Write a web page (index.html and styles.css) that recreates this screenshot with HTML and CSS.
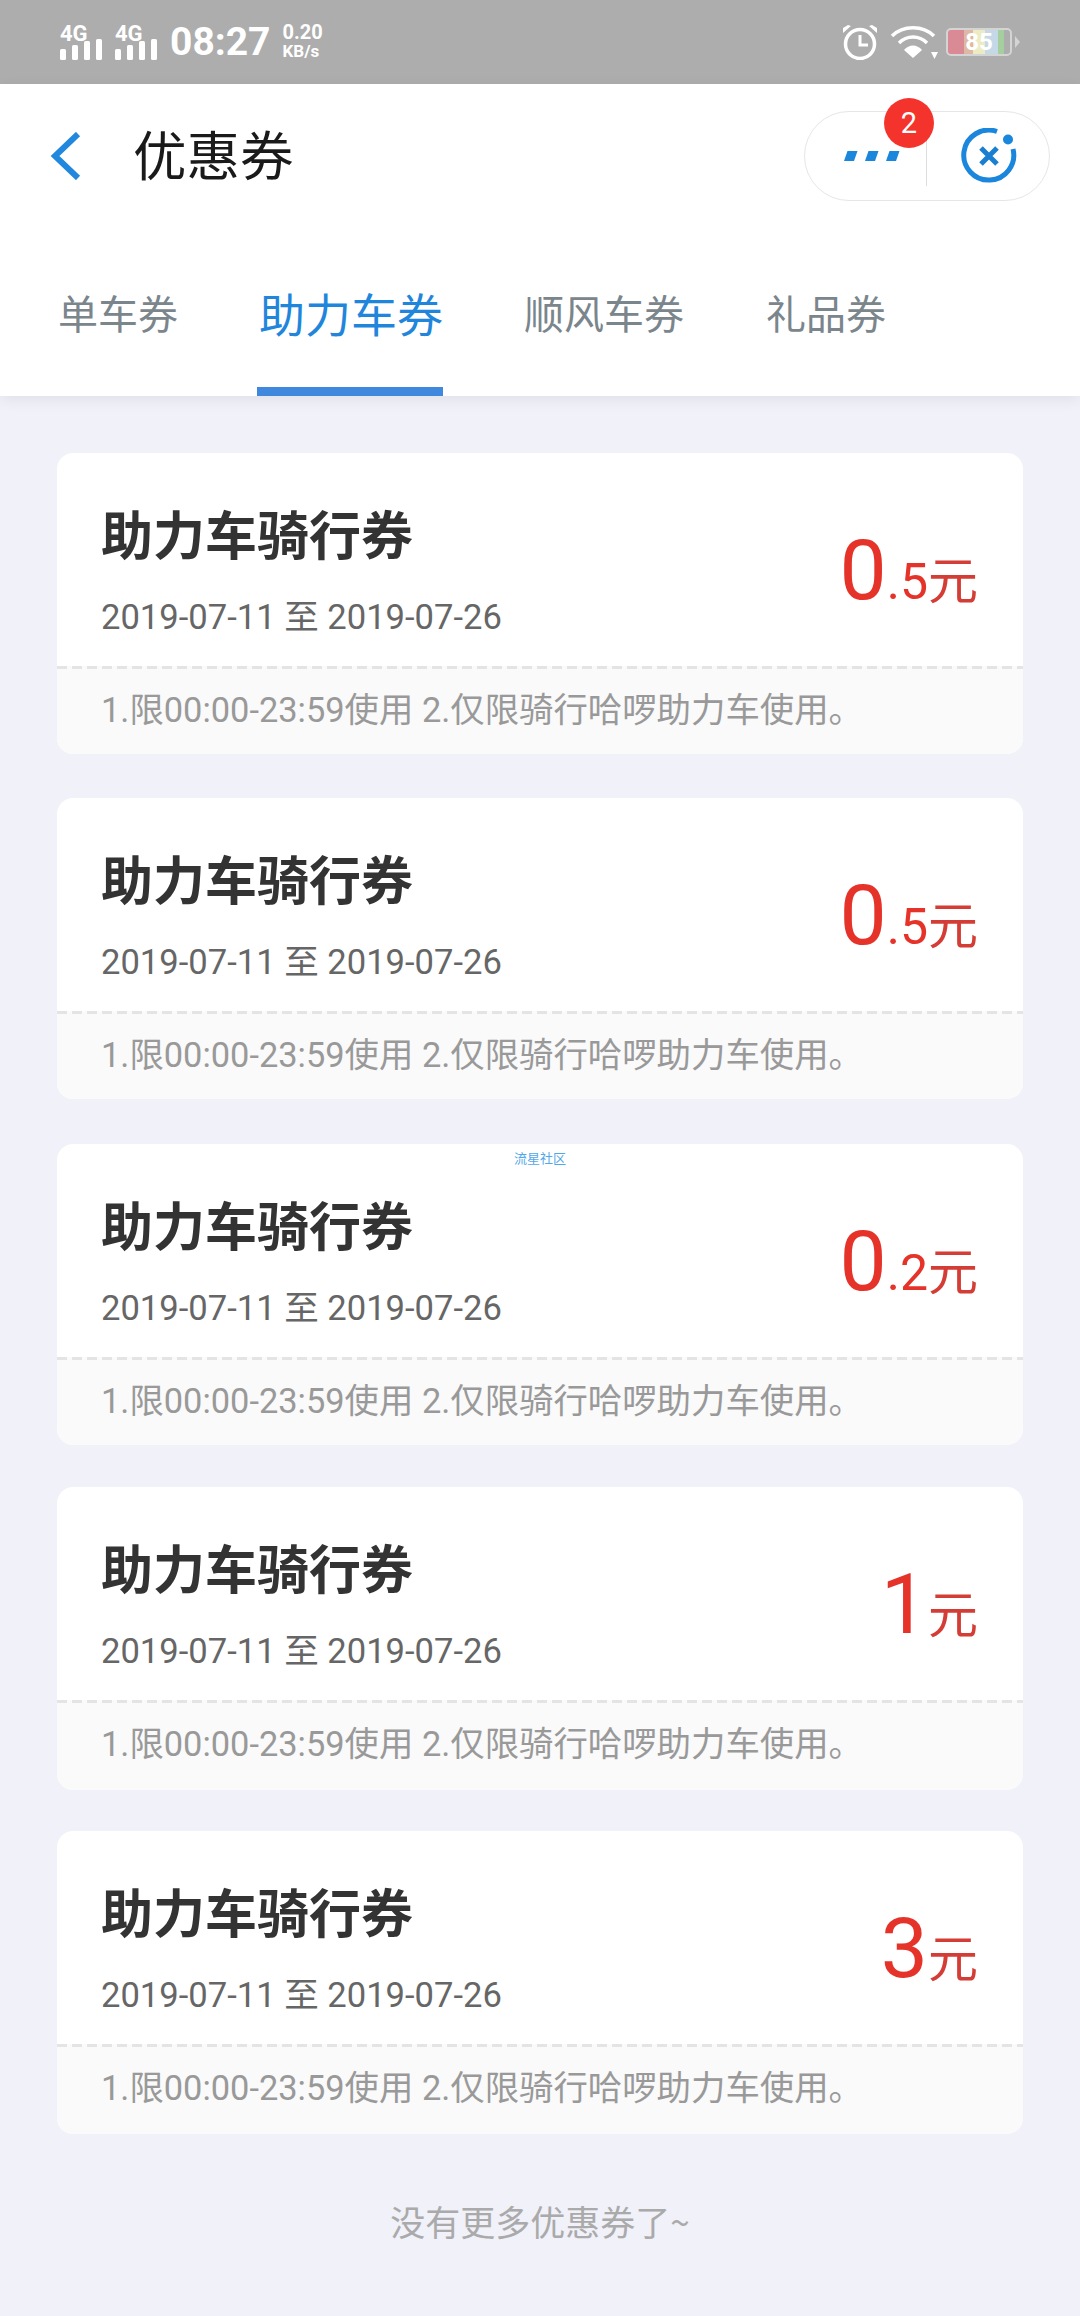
FILE: index.html
```html
<!DOCTYPE html>
<html lang="zh-CN">
<head>
<meta charset="utf-8">
<title>优惠券</title>
<link rel="stylesheet" href="styles.css">
</head>
<body>
<div class="status">
  <div class="status-left">
    <div class="net"><span class="net-label">4G</span><svg class="bars" width="42" height="21" viewBox="0 0 42 21"><g fill="#fff"><rect x="0" y="10" width="6" height="11" rx="1.5"/><rect x="12" y="6" width="6" height="15" rx="1.5"/><rect x="24" y="2" width="6" height="19" rx="1.5"/><rect x="36" y="0" width="6" height="21" rx="1.5"/></g></svg></div>
    <div class="net"><span class="net-label">4G</span><svg class="bars" width="42" height="21" viewBox="0 0 42 21"><g fill="#fff"><rect x="0" y="10" width="6" height="11" rx="1.5"/><rect x="12" y="6" width="6" height="15" rx="1.5"/><rect x="24" y="2" width="6" height="19" rx="1.5"/><rect x="36" y="0" width="6" height="21" rx="1.5"/></g></svg></div>
    <span class="clock">08:27</span>
    <div class="speed"><span>0.20</span><span class="speed-unit">KB/s</span></div>
  </div>
  <div class="status-right">
    <svg width="36" height="36" viewBox="0 0 36 36"><circle cx="18" cy="20" r="14.5" fill="none" stroke="#fff" stroke-width="3.5"/><path d="M18 11v10h8" fill="none" stroke="#fff" stroke-width="3"/><path d="M1 9 9 2 6 1 1 4zM35 9 27 2 30 1 35 4z" fill="#fff"/></svg>
    <svg width="48" height="36" viewBox="0 0 48 36"><g fill="none" stroke="#fff" stroke-width="3.500"><path d="M2 12C13 1 33 1 44 12"/><path d="M9 19C17 11 29 11 37 19"/></g><path d="M14 26C19 20 27 20 32 26L23 34Z" fill="#fff"/><path d="M41 28h7l-3.500 7z" fill="#fff"/></svg>
    <div class="battery"><div class="battery-body"><span class="battery-text">85</span></div><span class="battery-tip"></span></div>
  </div>
</div>
<header class="head">
  <div class="title-row">
    <svg class="back" width="34" height="48" viewBox="0 0 34 48"><path d="M30 2 7 24l23 22" fill="none" stroke="#2288dd" stroke-width="6"/></svg>
    <h1 class="title">优惠券</h1>
    <div class="capsule">
      <div class="cap-more">
        <svg width="58" height="10" viewBox="0 0 58 10"><g fill="#1a86dc"><path d="M3.500 0h10L10 10H0z"/><path d="M24.500 0h10L31 10H21z"/><path d="M45.500 0h10L52 10H42z"/></g></svg>
        <span class="badge">2</span>
      </div>
      <div class="cap-close">
        <svg width="56" height="56" viewBox="0 0 56 56"><path d="M36 3.500A25 25 0 1 0 52 21" fill="none" stroke="#1a86dc" stroke-width="5"/><circle cx="47" cy="11.500" r="5" fill="#1a86dc"/><path d="M20 20 36 36M36 20 20 36" stroke="#1a7fd0" stroke-width="5" fill="none"/></svg>
      </div>
    </div>
  </div>
  <nav class="tabs">
    <span class="tab">单车券</span>
    <span class="tab tab-active">助力车券</span>
    <span class="tab">顺风车券</span>
    <span class="tab">礼品券</span>
  </nav>
</header>
<main class="list">
  <article class="card">
    <div class="card-main">
      <div><div class="card-title">助力车骑行券</div><div class="card-date">2019-07-11 至 2019-07-26</div></div>
      <div class="price"><span class="int">0</span><span class="dec">.5</span><span class="yuan">元</span></div>
    </div>
    <div class="card-note">1.限00:00-23:59使用 2.仅限骑行哈啰助力车使用。</div>
  </article>
  <article class="card">
    <div class="card-main">
      <div><div class="card-title">助力车骑行券</div><div class="card-date">2019-07-11 至 2019-07-26</div></div>
      <div class="price"><span class="int">0</span><span class="dec">.5</span><span class="yuan">元</span></div>
    </div>
    <div class="card-note">1.限00:00-23:59使用 2.仅限骑行哈啰助力车使用。</div>
  </article>
  <article class="card">
    <span class="watermark">流星社区</span>
    <div class="card-main">
      <div><div class="card-title">助力车骑行券</div><div class="card-date">2019-07-11 至 2019-07-26</div></div>
      <div class="price"><span class="int">0</span><span class="dec">.2</span><span class="yuan">元</span></div>
    </div>
    <div class="card-note">1.限00:00-23:59使用 2.仅限骑行哈啰助力车使用。</div>
  </article>
  <article class="card">
    <div class="card-main">
      <div><div class="card-title">助力车骑行券</div><div class="card-date">2019-07-11 至 2019-07-26</div></div>
      <div class="price"><span class="int">1</span><span class="yuan">元</span></div>
    </div>
    <div class="card-note">1.限00:00-23:59使用 2.仅限骑行哈啰助力车使用。</div>
  </article>
  <article class="card">
    <div class="card-main">
      <div><div class="card-title">助力车骑行券</div><div class="card-date">2019-07-11 至 2019-07-26</div></div>
      <div class="price"><span class="int">3</span><span class="yuan">元</span></div>
    </div>
    <div class="card-note">1.限00:00-23:59使用 2.仅限骑行哈啰助力车使用。</div>
  </article>
  <p class="end">没有更多优惠券了~</p>
</main>
</body>
</html>
```

FILE: styles.css
```css
* { box-sizing: border-box; }
html, body { margin: 0; padding: 0; }
body {
  width: 1080px;
  height: 2316px;
  overflow: hidden;
  background: #f1f1f9;
  font-family: Roboto, "Noto Sans CJK SC", sans-serif;
}
.status {
  height: 84px;
  background: #adadad;
  color: #fff;
  display: flex;
  justify-content: space-between;
  align-items: center;
  padding: 0 60px 0 60px;
}
.status-left { display: flex; align-items: center; gap: 12px; }
.net { width: 42px; height: 36px; position: relative; margin-right: 1px; }
.net-label { position: absolute; left: 0; top: -1px; font-size: 22px; font-weight: 700; line-height: 22px; }
.bars { position: absolute; left: 0; bottom: 0; }
.clock { font-size: 39px; font-weight: 700; line-height: 44px; }
.speed { display: flex; flex-direction: column; font-size: 20px; font-weight: 700; line-height: 19px; }
.speed-unit { font-size: 17px; }
.status-right { display: flex; align-items: center; gap: 12px; }
.battery { display: flex; align-items: center; gap: 3px; margin-left: -4px; }
.battery-body {
  width: 66px; height: 28px;
  border: 2px solid #d4d4d4;
  border-radius: 5px;
  background: linear-gradient(90deg, #d98a94 0 25%, #ddb8a4 25% 40%, #ecebc4 40% 60%, #c4d8e8 60% 80%, #a5cf9f 80% 90%, #adadad 90%);
  display: flex; align-items: center; justify-content: center;
}
.battery-text { font-size: 24px; font-weight: 700; line-height: 24px; color: #fff; }
.battery-tip { width: 0; height: 0; border-left: 5px solid #d4d4d4; border-top: 6px solid transparent; border-bottom: 6px solid transparent; }
.head {
  height: 312px;
  background: #fff;
  box-shadow: 0 4px 14px rgba(0, 0, 0, .07);
  position: relative;
}
.title-row { height: 146px; display: flex; align-items: flex-start; padding: 0 0 0 48px; position: relative; }
.back { margin-top: 48px; flex: none; }
.title { margin: 34px 0 0 51px; font-size: 53.500px; font-weight: 400; line-height: 70px; color: #1a1a1a; font-family: "Noto Sans CJK SC", sans-serif; flex: 1; }
.capsule {
  flex: none;
  width: 246px; height: 90px;
  margin: 27px 30px 0 0;
  border: 1.5px solid #e6e6e6;
  border-radius: 45px;
  display: flex; align-items: center;
}
.cap-more { width: 122px; height: 60px; border-right: 1px solid #ddd; position: relative; display: flex; align-items: center; justify-content: flex-end; padding-right: 24px; }
.cap-close { flex: 1; display: flex; justify-content: center; padding-left: 2px; }
.badge {
  position: absolute; left: 79px; top: -28px;
  width: 50px; height: 50px; border-radius: 50%;
  background: #f5332d; color: #fff;
  font-size: 29px; line-height: 50px; text-align: center;
}
.tabs { display: flex; height: 166px; padding-left: 58px; font-family: "Noto Sans CJK SC", sans-serif; }
.tab { font-size: 40px; line-height: 58px; color: #7a858c; margin-right: 82px; height: 166px; padding-top: 53px; }
.tab-active { font-size: 46px; color: #1f86dc; border-bottom: 9px solid #3f88de; width: 186px; margin-right: 81px; margin-left: -3px; padding-left: 2px; white-space: nowrap; }
.list { padding: 57px 57px 0; display: flex; flex-direction: column; gap: 43.500px; }
.card { height: 301px; background: #fff; border-radius: 16px; overflow: hidden; position: relative; font-family: "Noto Sans CJK SC", sans-serif; }
.card:nth-child(3) { margin-top: 1.500px; }
.card:nth-child(4) { margin-top: -1.500px; height: 303px; }
.card:nth-child(5) { margin-top: -2px; height: 303px; }
.card-main { height: 213px; padding: 0 45px 0 44px; display: flex; justify-content: space-between; align-items: flex-start; }
.card-title { font-size: 52px; font-weight: 700; line-height: 72px; margin-top: 44px; color: #333; }
.card-date { font-size: 34.600px; line-height: 48px; margin-top: 24px; color: #666; font-family: Roboto, "Noto Sans CJK SC", sans-serif; }
.price { color: #e5332a; margin-top: 70px; display: flex; align-items: baseline; font-family: Roboto, "Noto Sans CJK SC", sans-serif; }
.int { font-size: 84px; line-height: 96px; }
.dec { font-size: 50px; line-height: 60px; }
.yuan { font-size: 50px; line-height: 60px; font-family: "Noto Sans CJK SC", sans-serif; color: #d43d35; }
.card-note {
  height: 90px;
  background: #fafafa linear-gradient(90deg, #e4e4e4 10px, transparent 10px) 0 0 / 15px 3px repeat-x;
  padding: 3px 44px 0;
  font-size: 34.400px; line-height: 83px;
  color: #999;
  font-family: Roboto, "Noto Sans CJK SC", sans-serif;
}
.watermark { position: absolute; left: 457px; top: 6px; font-size: 13px; line-height: 16px; color: #53a8ea; }
.end { margin: 20px 0 0; text-align: center; font-size: 35px; line-height: 46px; color: #aaa; font-family: "Noto Sans CJK SC", sans-serif; }
```
